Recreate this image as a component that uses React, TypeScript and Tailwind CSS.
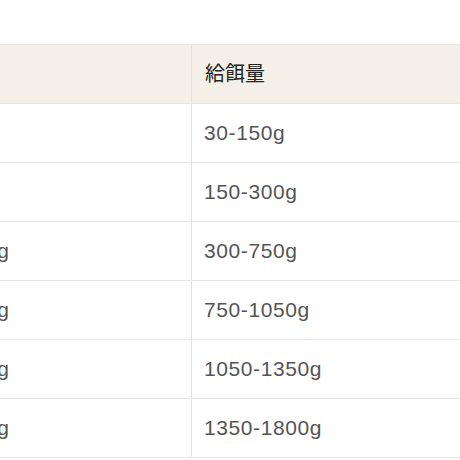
import React from "react";

const rows: [string, string][] = [
  ["0-50g", "30-150g"],
  ["50-100g", "150-300g"],
  ["100-250g", "300-750g"],
  ["250-350g", "750-1050g"],
  ["350-450g", "1050-1350g"],
  ["450-600g", "1350-1800g"],
];

export default function App() {
  return (
    <div
      className="w-[460px] h-[460px] overflow-hidden bg-white pt-[44px]"
      style={{ fontFamily: '"Liberation Sans", "Noto Sans CJK JP", sans-serif' }}
    >
      <div className="-ml-[96px] w-[760px]">
        <div className="grid grid-cols-[287px_1fr] h-[60px] bg-[#f5f0e7] border-y border-[#e9e4df]">
          <div className="flex items-center pl-[13px] text-[20px] text-[#222]">体重</div>
          <div className="flex items-center pl-[13px] border-l border-[#e6e1dc] text-[20px] text-[#222]">
            給餌量
          </div>
        </div>
        {rows.map(([w, f], i) => (
          <div key={i} className="grid grid-cols-[287px_1fr] h-[59px] border-b border-[#e9e6e3]">
            <div className="flex items-center pl-[12px] text-[21px] tracking-[0.6px] text-[#555]">{w}</div>
            <div className="flex items-center pl-[12px] border-l border-[#e6e1dc] text-[21px] tracking-[0.6px] text-[#555]">
              {f}
            </div>
          </div>
        ))}
      </div>
    </div>
  );
}
